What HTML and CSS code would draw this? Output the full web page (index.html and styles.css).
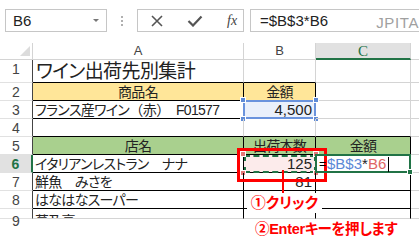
FILE: index.html
```html
<html lang="ja">

<head>
    <title>ワイン出荷先別集計</title>
    <link rel="stylesheet" href="styles.css">
</head>

<body>
    <div class="topbar">
        <div class="namebox">
            <span>B6</span>
            <span class="arrow"></span>
        </div>
        <div class="dots"><i></i><i></i><i></i></div>
        <div class="btns">
            <svg width="14" height="12" viewBox="0 0 14 12"><path d="M2 1l10 10M12 1L2 11" stroke="#555" stroke-width="1.6" fill="none"/></svg>
            <svg width="16" height="12" viewBox="0 0 16 12"><path d="M1.5 6l4.5 4.5L14.5 1.5" stroke="#555" stroke-width="2.2" fill="none"/></svg>
            <span class="fx">fx</span>
        </div>
        <div class="formula">
            <span>=$B$3*B6</span>
            <span class="mark">JPITA</span>
        </div>
    </div>

    <div class="sheet">
        <!-- column headers -->
        <div class="hd corner"><span class="tri"></span></div>
        <div class="hd">A</div>
        <div class="hd">B</div>
        <div class="hd sel">C</div>
        <div class="hd"></div>

        <!-- row 1 -->
        <div class="rn">1</div>
        <div class="c title bb">ワイン出荷先別集計</div>
        <div class="c bb"></div>
        <div class="c"></div>
        <div class="c"></div>

        <!-- row 2 -->
        <div class="rn">2</div>
        <div class="c orange ctr bb br">商品名</div>
        <div class="c orange ctr bb br">金額</div>
        <div class="c"></div>
        <div class="c"></div>

        <!-- row 3 -->
        <div class="rn">3</div>
        <div class="c bb br">フランス産ワイン<span class="wide">（赤）</span>　F01577</div>
        <div class="c num blue bb br">4,500
            <span class="frame fb"></span>
            <span class="h hb tl"></span><span class="h hb tr"></span>
            <span class="h hb bl"></span><span class="h hb brh"></span>
        </div>
        <div class="c"></div>
        <div class="c"></div>

        <!-- row 4 -->
        <div class="rn">4</div>
        <div class="c bb"></div>
        <div class="c bb"></div>
        <div class="c bb"></div>
        <div class="c"></div>

        <!-- row 5 -->
        <div class="rn">5</div>
        <div class="c green ctr bb br">店名</div>
        <div class="c green ctr bb br">出荷本数</div>
        <div class="c green ctr bb br">金額</div>
        <div class="c"></div>

        <!-- row 6 -->
        <div class="rn act">6</div>
        <div class="c bb br">イタリアンレストラン　ナナ</div>
        <div class="c num pink bb br">125
            <span class="frame fd"></span>
            <span class="h hp tl"></span><span class="h hp tr"></span>
            <span class="h hp bl"></span><span class="h hp brh"></span>
        </div>
        <div class="c edit bb br"><span class="eq">=</span><span class="rb">$B$3</span>*<span class="rr">B6</span><span class="caret"></span>
            <span class="fill"></span>
        </div>
        <div class="c"></div>

        <!-- row 7 -->
        <div class="rn">7</div>
        <div class="c bb br">鮮魚　みさを</div>
        <div class="c num bb br">81</div>
        <div class="c bb br"></div>
        <div class="c"></div>

        <!-- row 8 -->
        <div class="rn">8</div>
        <div class="c bb br">はなはなスーパー</div>
        <div class="c num bb br"></div>
        <div class="c bb br"></div>
        <div class="c"></div>

        <!-- row 9 (cut off) -->
        <div class="rn cut">9</div>
        <div class="c cut br">萬及亭</div>
        <div class="c br"></div>
        <div class="c br"></div>
        <div class="c"></div>
    </div>

    <!-- annotations drawn over the sheet -->
    <div class="box-red"></div>
    <div class="line-red"></div>
    <div class="note n1">①クリック</div>
    <div class="note n2">②Enterキーを押します</div>
</body>

</html>
```

FILE: styles.css
```css
body {
    margin: 0;
    width: 419px;
    height: 245px;
    overflow: hidden;
    background: white;
    position: relative;
    font-family: "Liberation Sans", "Noto Sans CJK JP", sans-serif;
    color: #222;
}

/* formula bar */
.topbar {
    height: 43px;
    box-sizing: border-box;
    padding: 9px 0 0 5px;
    display: flex;
    align-items: flex-start;
}

.namebox {
    width: 102px;
    height: 23px;
    box-sizing: border-box;
    border: 1px solid #c6c6c6;
    display: flex;
    align-items: center;
    justify-content: space-between;
    padding: 0 7px 0 7px;
    font-size: 15px;
}

.arrow {
    width: 0;
    height: 0;
    border-left: 3px solid transparent;
    border-right: 3px solid transparent;
    border-top: 3px solid #777;
}

.dots {
    width: 30px;
    height: 23px;
    display: flex;
    flex-direction: column;
    align-items: center;
    justify-content: center;
    gap: 2px;
}

.dots i {
    width: 2px;
    height: 2px;
    background: #b0b0b0;
}

.btns {
    width: 107px;
    height: 23px;
    box-sizing: border-box;
    border: 1px solid #c6c6c6;
    display: flex;
    align-items: center;
    padding-left: 12px;
    gap: 23px;
}

.fx {
    font-family: "Liberation Serif", serif;
    font-style: italic;
    font-size: 14px;
    color: #444;
    margin-left: 1px;
}

.formula {
    margin-left: 6px;
    flex: 1;
    height: 23px;
    box-sizing: border-box;
    border: 1px solid #c6c6c6;
    border-right: none;
    padding-left: 9px;
    font-size: 15px;
    line-height: 21px;
    display: flex;
    justify-content: space-between;
}

.mark {
    position: relative;
    top: 5px;
    height: 15px;
    background: white;
    color: #a0a0a0;
    font-size: 15px;
    line-height: 15px;
    letter-spacing: 0.6px;
}

/* sheet */
.sheet {
    display: grid;
    grid-template-columns: 33px 211px 72px 95px 20px;
    grid-template-rows: 17px 23px 18px 18px 18px 18px 18px 18px 18px 10px;
    font-size: 14px;
}

.hd {
    box-sizing: border-box;
    border-right: 1px solid #d4d4d4;
    border-bottom: 1px solid #d4d4d4;
    text-align: center;
    font-size: 13px;
    line-height: 16px;
    color: #444;
}

.corner {
    position: relative;
}

.tri {
    position: absolute;
    right: 2px;
    bottom: 3px;
    width: 0;
    height: 0;
    border-left: 10px solid transparent;
    border-bottom: 10px solid #dcdcdc;
}

.hd.sel {
    background: #e1e1e1;
    color: #217346;
    border-bottom: 2px solid #217346;
    font-family: "Liberation Serif", serif;
    font-size: 15px;
}

.rn {
    box-sizing: border-box;
    border-right: 1px solid #444;
    border-bottom: 1px solid #e1e1e1;
    text-align: center;
    font-size: 14px;
    line-height: 19px;
    color: #444;
}

.rn.act {
    background: #e1e1e1;
    color: #217346;
    font-weight: bold;
    border-right: 2px solid #217346;
}

.c {
    box-sizing: border-box;
    border-right: 1px solid #d4d4d4;
    border-bottom: 1px solid #d4d4d4;
    padding: 0 2px;
    white-space: nowrap;
    overflow: hidden;
    line-height: 18px;
    letter-spacing: -0.7px;
    font-feature-settings: "palt";
    position: relative;
}

.wide {
    font-feature-settings: normal;
    letter-spacing: -0.5px;
}

.cut {
    line-height: 24px;
}

.bb {
    border-bottom-color: #000;
}

.br {
    border-right-color: #000;
}

.title {
    font-size: 19px;
    line-height: 24px;
    padding-left: 3px;
    letter-spacing: -0.6px;
}

.ctr {
    text-align: center;
}

.num {
    text-align: right;
    font-size: 15px;
    letter-spacing: 0;
    padding-right: 3px;
    overflow: visible;
}

.orange {
    background: #ffe699;
}

.green {
    background: #a9d08e;
}

.blue {
    background: #eaf0fb;
}

.pink {
    background: #fcebeb;
}

/* reference frames */
.frame {
    position: absolute;
    left: -1px;
    top: -1px;
    right: -1px;
    bottom: -1px;
}

.fb {
    border: 2px solid #6a93dd;
}

.fd {
    left: 0;
    top: 0;
    border: 2px dashed #217346;
}

.h {
    position: absolute;
    width: 6px;
    height: 6px;
    box-sizing: border-box;
    border: 1px solid white;
}

.hb {
    background: #5f8bd6;
}

.hp {
    background: #e57a7a;
}

.tl { left: -4px; top: -4px; }
.tr { right: -4px; top: -4px; }
.bl { left: -4px; bottom: -4px; }
.brh { right: -4px; bottom: -4px; }

.edit {
    overflow: visible;
    border: 2px solid #217346;
    margin: -1px 0 0 -1px;
    padding-left: 0;
    font-size: 15px;
    line-height: 16px;
    letter-spacing: 0;
    z-index: 3;
}

.eq {
    display: inline-block;
    width: 9px;
    padding-left: 2px;
    box-sizing: border-box;
    color: #000;
    font-size: 12px;
    line-height: 12px;
    vertical-align: 1px;
}

.rb {
    color: #5b88d6;
    margin-left: 1px;
}

.rr {
    color: #e06666;
}

.caret {
    display: inline-block;
    width: 1px;
    height: 15px;
    background: #000;
    vertical-align: -3px;
    margin-left: 2px;
}

.fill {
    position: absolute;
    right: -4px;
    bottom: -4px;
    width: 6px;
    height: 6px;
    box-sizing: border-box;
    background: #217346;
    border: 1px solid white;
}

/* annotations */
.box-red {
    position: absolute;
    z-index: 1;
    left: 237px;
    top: 148px;
    width: 90px;
    height: 34px;
    box-sizing: border-box;
    border: 3px solid #f00;
}

.line-red {
    position: absolute;
    left: 282px;
    top: 170px;
    width: 2px;
    height: 23px;
    background: #f00;
}

.note {
    position: absolute;
    background: white;
    color: #f00;
    font-weight: bold;
    font-size: 15px;
    font-feature-settings: "palt";
    line-height: 20px;
}

.n1 {
    left: 247px;
    top: 193px;
    width: 75px;
    text-align: center;
}

.n2 {
    left: 252px;
    top: 219px;
    padding: 0 3px;
    font-size: 14.5px;
    letter-spacing: -0.3px;
}
```
